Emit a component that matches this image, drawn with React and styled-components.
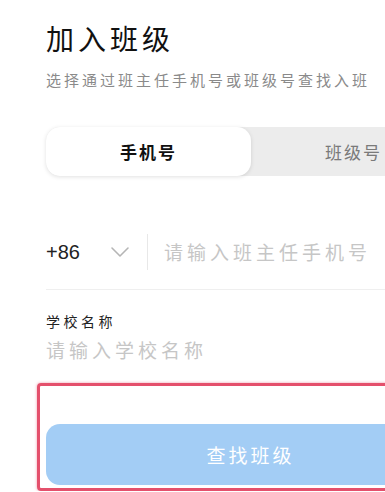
import { createGlobalStyle, styled } from 'styled-components'

const GlobalStyle = createGlobalStyle`
  html, body {
    margin: 0;
    padding: 0;
    background: #fff;
    overflow: hidden;
  }
  body {
    font-family: "Noto Sans CJK SC", "Noto Sans", sans-serif;
  }
`

function Chevron() {
  return (
    <svg width="20" height="12" viewBox="0 0 20 12" fill="none">
      <path d="M2 2 L10 10 L18 2" stroke="#b5b5b5" strokeWidth="1.6" strokeLinecap="round" strokeLinejoin="round" />
    </svg>
  )
}

function App() {
  return (
    <Page>
      <GlobalStyle />
      <Title>加入班级</Title>
      <Subtitle>选择通过班主任手机号或班级号查找入班</Subtitle>

      <Tabs>
        <Tab $active>手机号</Tab>
        <Tab>班级号</Tab>
      </Tabs>

      <PhoneRow>
        <Prefix>+86</Prefix>
        <Chevron />
        <Divider />
        <Placeholder>请输入班主任手机号</Placeholder>
      </PhoneRow>

      <FieldLabel>学校名称</FieldLabel>
      <Placeholder>请输入学校名称</Placeholder>

      <Highlight>
        <SearchButton>查找班级</SearchButton>
      </Highlight>
    </Page>
  )
}

const Page = styled.main`
  width: 502px;
  box-sizing: border-box;
  padding: 20px 46px 0 46px;
  display: flex;
  flex-direction: column;
`

const Title = styled.h1`
  margin: 0;
  font-size: 28px;
  font-weight: 400;
  line-height: 36px;
  letter-spacing: 4px;
  color: #111;
`

const Subtitle = styled.p`
  margin: 14px 0 0;
  font-size: 15px;
  line-height: 20px;
  letter-spacing: 3px;
  color: #8a8a8a;
  white-space: nowrap;
`

const Tabs = styled.div`
  margin-top: 37px;
  height: 49px;
  display: grid;
  grid-template-columns: 1fr 1fr;
  background: #ececec;
  border-radius: 14px;
`

const Tab = styled.div`
  display: flex;
  align-items: center;
  justify-content: center;
  font-size: 17px;
  letter-spacing: 2px;
  font-weight: ${p => (p.$active ? 700 : 400)};
  color: ${p => (p.$active ? '#111' : '#7a7a7a')};
  background: ${p => (p.$active ? '#fff' : 'transparent')};
  border-radius: 14px;
  box-shadow: ${p => (p.$active ? '0 1px 4px rgba(0,0,0,0.12)' : 'none')};
`

const PhoneRow = styled.div`
  margin-top: 56px;
  height: 40px;
  display: flex;
  align-items: center;
  padding-bottom: 17px;
  border-bottom: 1px solid #efefef;

  svg {
    margin-left: 30px;
  }
`

const Prefix = styled.span`
  font-family: "Liberation Sans", Arial, sans-serif;
  font-size: 20px;
  color: #222;
  width: 34px;
`

const Divider = styled.span`
  width: 1px;
  height: 36px;
  background: #e8e8e8;
  margin: 0 16px 0 17px;
`

const Placeholder = styled.span`
  font-size: 19px;
  line-height: 26px;
  letter-spacing: 4px;
  color: #c6c6c6;
  white-space: nowrap;
`

const FieldLabel = styled.label`
  margin: 21px 0 6px;
  font-size: 14px;
  line-height: 20px;
  letter-spacing: 3.5px;
  color: #222;
`

const Highlight = styled.div`
  margin: 20px -8px 0 -9px;
  padding: 38px 6px 3px 6px;
  border: 3px solid #e4506c;
  border-radius: 4px;
  box-shadow: 0 0 3px rgba(228, 80, 108, 0.6);
`

const SearchButton = styled.button`
  width: 100%;
  height: 61px;
  border: none;
  border-radius: 14px;
  background: #a3cdf5;
  color: #fff;
  font-family: "Noto Sans CJK SC", sans-serif;
  font-size: 19px;
  letter-spacing: 3px;
`

export default App
